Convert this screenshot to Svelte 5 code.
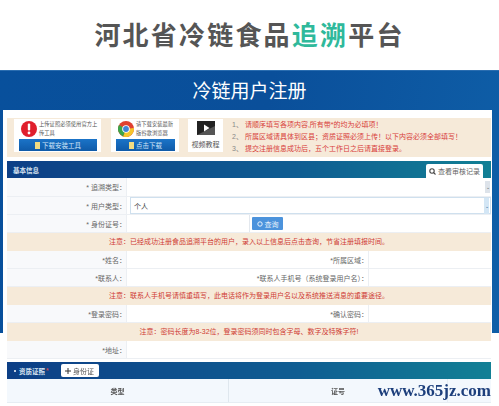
<script>
    const notes = [
        '请顺序填写各项内容,所有带*的均为必填项！',
        '所属区域请具体到区县；资质证照必须上传！以下内容必须全部填写！',
        '提交注册信息成功后，五个工作日之后请直接登录。'
    ];
</script>

<style>
    :global(body) {
        margin: 0;
        background: #fff;
        overflow: hidden;
    }

    #page {
        position: relative;
        width: 499px;
        height: 406px;
        overflow: hidden;
        font-family: "Liberation Sans", "Noto Sans CJK SC", sans-serif;
        background: linear-gradient(#fff 333px, transparent 333px);
    }

    .top {
        height: 70px;
        display: flex;
        align-items: center;
        justify-content: center;
        box-sizing: border-box;
        padding-bottom: 3px;
        font-size: 26px;
        font-weight: 700;
        letter-spacing: 4.6px;
        color: #555;
        letter-spacing: 2.2px;
    }

    .top em {
        font-style: normal;
        color: #2fb99b;
    }

    .band {
        height: 263px;
        background: linear-gradient(100deg, #08509c, #0a4f9a 50%, #0f5fa8);
        border-top: 1px solid #2a6db0;
        box-sizing: border-box;
    }

    .band h1 {
        margin: 0;
        height: 39px;
        line-height: 41px;
        text-align: center;
        font-size: 19px;
        font-weight: 400;
        color: #fff;
    }

    .panel {
        width: 489px;
        height: 296px;
        margin-left: 3px;
        box-sizing: border-box;
        padding: 8px 1px 0 4px;
        background: #fff;
        filter: blur(0.35px);
    }

    .tips {
        height: 39px;
        box-sizing: border-box;
        padding: 1px 7px;
        display: flex;
        background: #f6ead9;
    }

    .card {
        height: 33px;
        box-sizing: border-box;
        background: #fff;
        margin-right: 10px;
        font-size: 5.3px;
        color: #555;
        flex: none;
    }

    .card.one { width: 87px; }
    .card.two { width: 68px; margin-right: 9px; }
    .card.three {
        width: 35px;
        margin-right: 9px;
        text-align: center;
        font-size: 7px;
        padding-top: 2px;
    }

    .card.three svg { display: block; margin: 0 auto 2px; }

    .info {
        height: 20px;
        display: flex;
        align-items: center;
        gap: 2px;
        padding: 0 2px 0 7px;
        line-height: 9px;
    }

    .info svg { flex: none; }

    .dl {
        height: 12px;
        margin: 0 4px 0 5px;
        display: flex;
        align-items: center;
        justify-content: center;
        gap: 2px;
        background: linear-gradient(#1b74c8, #0f5aa8);
        color: #cfe4f7;
        font-size: 6.5px;
    }

    .dl i {
        width: 5px;
        height: 7px;
        background: #f0dc82;
    }

    .lines {
        margin: 0;
        padding: 0;
        list-style: none;
        font-size: 7px;
        line-height: 12px;
        color: #d8403a;
    }

    .lines span { color: #888; margin-right: 2px; }

    .bar {
        height: 17px;
        margin-top: 4px;
        display: flex;
        align-items: center;
        justify-content: space-between;
        box-sizing: border-box;
        padding: 0 8px 0 6px;
        background: linear-gradient(90deg, #0d3f86, #0f5d92 60%, #128095);
        color: #dbe6f2;
        font-size: 6.5px;
        font-weight: 700;
    }

    .bar .log {
        align-self: flex-end;
        width: 57px;
        height: 14px;
        display: flex;
        align-items: center;
        justify-content: center;
        gap: 2px;
        background: #fff;
        border-radius: 2px 2px 0 0;
        color: #666;
        font-weight: 400;
        font-size: 7px;
    }

    .row {
        height: 18px;
        display: flex;
        border-bottom: 1px solid #eceff3;
        box-sizing: border-box;
        font-size: 7px;
        color: #666;
    }

    .label {
        flex: none;
        width: 120px;
        box-sizing: border-box;
        padding-right: 0;
        display: flex;
        align-items: center;
        justify-content: flex-end;
        background: #f8f9fb;
        border-right: 1px solid #eceff3;
    }

    .field { width: 122px; flex: none; }

    .label.right {
        width: 120px;
        background: #fff;
    }

    .row .grow { flex: 1; position: relative; }

    .arrow {
        position: absolute;
        right: 1px;
        top: 3px;
        width: 5px;
        height: 12px;
        display: flex;
        align-items: center;
        justify-content: center;
        background: #dde3ea;
        color: #555;
        font-size: 5px;
    }

    .sel {
        margin: 0 0 0 3px;
        border: 1px solid #cfe0ee;
        display: flex;
        align-items: center;
        padding-left: 3px;
        color: #444;
    }

    .sel .arrow {
        top: 0;
        background: #d3e6f5;
        height: 16px;
        color: #1c5b95;
    }

    .query {
        width: 31px;
        height: 13px;
        margin: 2px 0 0 2px;
        display: flex;
        align-items: center;
        justify-content: center;
        gap: 2px;
        background: #4c93dc;
        color: #e8f2fb;
        border-radius: 1px;
    }

    .warn {
        height: 18px;
        line-height: 17px;
        text-align: center;
        background: #f6ead9;
        color: #cf3a33;
        font-size: 7px;
    }

    .bar.second {
        margin-top: 3px;
        justify-content: flex-start;
        padding-left: 7px;
    }

    .bar.second .dot {
        width: 2px;
        height: 2px;
        border-radius: 50%;
        background: #fff;
        margin-right: 3px;
    }

    .bar.second .star {
        color: #c9474f;
        margin-left: 1px;
    }

    .bar.second .add {
        width: 38px;
        height: 13px;
        margin-left: 12px;
        display: flex;
        align-items: center;
        justify-content: center;
        gap: 2px;
        background: #fff;
        border-radius: 2px;
        color: #555;
        font-weight: 400;
        font-size: 7px;
    }

    .thead {
        height: 23px;
        display: flex;
        background: #f3f8fd;
        border-bottom: 1px solid #e6edf3;
        font-size: 7px;
        font-weight: 700;
        color: #555;
    }

    .thead div {
        display: flex;
        align-items: center;
        justify-content: center;
    }

    .thead .type {
        width: 221px;
        border-right: 1px solid #dfe7ee;
    }

    .thead .no {
        width: 218px;
        border-right: 1px solid #e6edf3;
    }

    .cell {
        padding: 2px 0 0 5px;
        font-size: 7px;
        color: #555;
    }

    .mark {
        position: absolute;
        right: 8px;
        bottom: 5px;
        font-family: "Liberation Serif", serif;
        font-size: 17px;
        font-weight: 700;
        letter-spacing: 0;
        line-height: 20px;
        color: #1d3f7c;
    }
</style>

<div id="page">
    <div class="top"><span>河北省冷链食品<em>追溯</em>平台</span></div>
    <div class="band">
        <h1>冷链用户注册</h1>
        <div class="panel">
            <div class="tips">
                <div class="card one">
                    <div class="info">
                        <svg width="16" height="16" viewBox="0 0 16 16">
                            <circle cx="8" cy="8" r="8" fill="#e01f2d"/>
                            <rect x="6.8" y="2.5" width="2.4" height="7" rx="1" fill="#fff"/>
                            <circle cx="8" cy="12" r="1.4" fill="#fff"/>
                        </svg>
                        <span>上传证照必须使用官方上传工具</span>
                    </div>
                    <div class="dl"><i></i>下载安装工具</div>
                </div>
                <div class="card two">
                    <div class="info">
                        <svg width="16" height="16" viewBox="0 0 16 16">
                            <circle cx="8" cy="8" r="8" fill="#e0402f"/>
                            <path d="M8 8 L15.9 7 A8 8 0 0 1 5 15.4 Z" fill="#f6c52c"/>
                            <path d="M8 8 L5 15.4 A8 8 0 0 1 1 4 Z" fill="#3ba54a"/>
                            <circle cx="8" cy="8" r="3.8" fill="#fff"/>
                            <circle cx="8" cy="8" r="2.9" fill="#3f83d8"/>
                        </svg>
                        <span>请下载安装最新版谷歌浏览器</span>
                    </div>
                    <div class="dl"><i></i>点击下载</div>
                </div>
                <div class="card three">
                    <svg width="18" height="16" viewBox="0 0 18 16">
                        <rect width="18" height="14" fill="#222"/>
                        <path d="M0 14 L18 5 V14 Z" fill="#555"/>
                        <path d="M7 3.5 L12.5 7 L7 10.5 Z" fill="#fff"/>
                    </svg>
                    视频教程
                </div>
                <ol class="lines">
                    {#each notes as n, i}
                        <li><span>{i + 1}、</span>{n}</li>
                    {/each}
                </ol>
            </div>

            <div class="bar">
                <span>基本信息</span>
                <span class="log">
                    <svg width="7" height="7" viewBox="0 0 7 7"><circle cx="3" cy="3" r="2.2" fill="none" stroke="#444" stroke-width="1.1"/><path d="M4.6 4.6 L6.5 6.5" stroke="#444" stroke-width="1.1"/></svg>
                    查看审核记录
                </span>
            </div>

            <div class="row" style="height:19px">
                <div class="label">* 追溯类型：</div>
                <div class="grow"><span class="arrow">⌄</span></div>
            </div>
            <div class="row">
                <div class="label">* 用户类型：</div>
                <div class="grow sel">个人<span class="arrow">⌄</span></div>
            </div>
            <div class="row">
                <div class="label">* 身份证号：</div>
                <div class="field" style="border-right:1px solid #e3e8ee"></div>
                <div class="query">
                    <svg width="6" height="6" viewBox="0 0 6 6"><circle cx="3" cy="3" r="2.2" fill="none" stroke="#e8f2fb"/></svg>
                    查询
                </div>
            </div>
            <div class="warn">注意：已经成功注册食品追溯平台的用户，录入以上信息后点击查询，节省注册填报时间。</div>
            <div class="row">
                <div class="label">*姓名：</div>
                <div class="field"></div>
                <div class="label right">*所属区域：</div>
                <div class="grow"></div>
            </div>
            <div class="row">
                <div class="label">*联系人：</div>
                <div class="field"></div>
                <div class="label right">*联系人手机号（系统登录用户名）：</div>
                <div class="grow"></div>
            </div>
            <div class="warn">注意：联系人手机号请慎重填写，此电话将作为登录用户名以及系统推送消息的重要途径。</div>
            <div class="row">
                <div class="label">*登录密码：</div>
                <div class="field"></div>
                <div class="label right">*确认密码：</div>
                <div class="grow"></div>
            </div>
            <div class="warn">注意：密码长度为8-32位，登录密码须同时包含字母、数字及特殊字符!</div>
            <div class="row">
                <div class="label">*地址：</div>
                <div class="grow"></div>
            </div>

            <div class="bar second">
                <i class="dot"></i>
                <span>资质证照</span><span class="star">*</span>
                <span class="add">
                    <svg width="6" height="6" viewBox="0 0 6 6"><path d="M3 0 V6 M0 3 H6" stroke="#333" stroke-width="1"/></svg>
                    身份证
                </span>
            </div>
            <div class="thead">
                <div class="type">类型</div>
                <div class="no">证号</div>
            </div>
            <div class="cell">身份证正面照</div>
        </div>
    </div>
    <div class="mark">www.365jz.com</div>
</div>
